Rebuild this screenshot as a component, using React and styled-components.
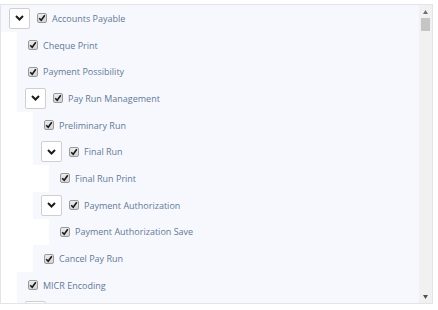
import React from "react";
import styled, { createGlobalStyle } from "styled-components";

const GlobalStyle = createGlobalStyle`
  html, body { margin: 0; padding: 0; background: #fff; }
  body { font-family: "Open Sans", "Noto Sans", sans-serif; }
`;

const Frame = styled.div`
  box-sizing: border-box;
  margin-top: 4px;
  width: 433px;
  height: 300px;
  border: 1px solid #e4e4e4;
  background: #fff;
  display: flex;
`;

const Viewport = styled.div`
  flex: 1;
  min-width: 0;
  overflow: hidden;
`;

const ScrollTrack = styled.div`
  width: 13px;
  flex: none;
  display: flex;
  flex-direction: column;
  background: #f1f1f1;
`;

const ScrollButton = styled.div`
  height: 13px;
  flex: none;
  display: flex;
  align-items: center;
  justify-content: center;
`;

const Thumb = styled.div`
  height: 13px;
  margin: 0 2px;
  background: #c5c5c5;
`;

const Spacer = styled.div`
  flex: 1;
`;

const Tree = styled.ul`
  list-style: none;
  margin: 0;
  padding: 0;
`;

const SubTree = styled(Tree)`
  margin-left: 16px;
`;

const Row = styled.div`
  display: flex;
  align-items: center;
  height: 26.7px;
  box-sizing: border-box;
  padding-left: ${(p) => (p.$parent ? 8 : 11)}px;
  background: #f7f8fe;
`;

const Toggle = styled.button`
  box-sizing: border-box;
  width: 21px;
  height: 21px;
  margin: 0 7px 0 0;
  padding: 0;
  display: flex;
  align-items: center;
  justify-content: center;
  background: #fff;
  border: 1px solid #cfcfcf;
  border-radius: 2px;
  cursor: pointer;
`;

const Check = styled.span`
  box-sizing: border-box;
  width: 10px;
  height: 10px;
  flex: none;
  display: flex;
  align-items: center;
  justify-content: center;
  border: 1px solid #9a9a9a;
  border-radius: 2px;
  background: linear-gradient(#ececec, #d4d4d4);
  margin-right: 5px;
`;

const Label = styled.span`
  font-size: 9px;
  color: #627895;
  white-space: nowrap;
  line-height: 1;
`;

const Chevron = () => (
  <svg width="9" height="6" viewBox="0 0 9 6">
    <path d="M1 1 L4.5 4.5 L8 1" fill="none" stroke="#1d1d1d" strokeWidth="2" />
  </svg>
);

const Tick = () => (
  <svg width="8" height="8" viewBox="0 0 8 8">
    <path d="M1.2 4.2 L3.2 6.2 L6.8 1.2" fill="none" stroke="#1a1a1a" strokeWidth="1.6" />
  </svg>
);

const Arrow = ({ down }) => (
  <svg width="5" height="4" viewBox="0 0 5 4">
    <path d={down ? "M0 0 L5 0 L2.5 4 Z" : "M0 4 L2.5 0 L5 4 Z"} fill={down ? "#505050" : "#707070"} />
  </svg>
);

const leaf = (name) => ({ name });
const group = (name, children) => ({ name, children });

const data = [
  group("Accounts Payable", [
    leaf("Cheque Print"),
    leaf("Payment Possibility"),
    group("Pay Run Management", [
      leaf("Preliminary Run"),
      group("Final Run", [leaf("Final Run Print")]),
      group("Payment Authorization", [leaf("Payment Authorization Save")]),
      leaf("Cancel Pay Run"),
    ]),
    leaf("MICR Encoding"),
    group("Bank Reconciliation", [leaf("Statement Import")]),
  ]),
];

const Node = ({ node }) => {
  const parent = !!node.children;
  return (
    <li>
      <Row $parent={parent}>
        {parent && (
          <Toggle type="button" aria-label="collapse">
            <Chevron />
          </Toggle>
        )}
        <Check>
          <Tick />
        </Check>
        <Label>{node.name}</Label>
      </Row>
      {parent && (
        <SubTree>
          {node.children.map((c, i) => (
            <Node key={i} node={c} />
          ))}
        </SubTree>
      )}
    </li>
  );
};

export default function App() {
  return (
    <>
      <GlobalStyle />
      <Frame>
        <Viewport>
          <Tree>
            {data.map((n, i) => (
              <Node key={i} node={n} />
            ))}
          </Tree>
        </Viewport>
        <ScrollTrack aria-hidden="true">
          <ScrollButton>
            <Arrow />
          </ScrollButton>
          <Thumb />
          <Spacer />
          <ScrollButton>
            <Arrow down />
          </ScrollButton>
        </ScrollTrack>
      </Frame>
    </>
  );
}
